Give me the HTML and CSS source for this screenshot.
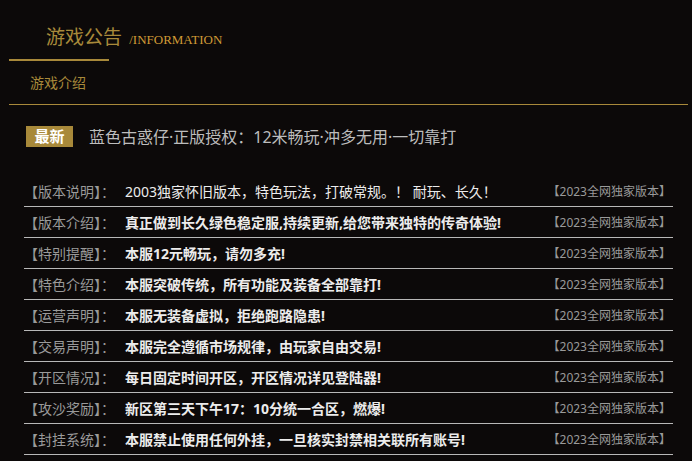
FILE: index.html
```html
<!DOCTYPE html>
<html lang="zh-CN">
<head>
    <meta charset="UTF-8">
    <meta name="viewport" content="width=device-width, initial-scale=1.0">
    <title>游戏公告</title>
    <link rel="stylesheet" href="styles.css">
</head>
<body>

<div class="wrap">
    <div class="head">
        <span class="head-title">游戏公告</span>
        <span class="head-en">/INFORMATION</span>
    </div>
    <div class="head-line"></div>
    <div class="tab">游戏介绍</div>

    <div class="news">
        <span class="badge">最新</span>
        <span class="news-title">蓝色古惑仔·正版授权：12米畅玩·冲多无用·一切靠打</span>
    </div>

    <ul class="list">
        <li class="row">
            <span class="label">【版本说明】：</span>
            <span class="text thin">2003独家怀旧版本，特色玩法，打破常规。！ 耐玩、长久！</span>
            <span class="tag">【2023全网独家版本】</span>
        </li>
        <li class="row">
            <span class="label">【版本介绍】：</span>
            <span class="text">真正做到长久绿色稳定服,持续更新,给您带来独特的传奇体验!</span>
            <span class="tag">【2023全网独家版本】</span>
        </li>
        <li class="row">
            <span class="label">【特别提醒】：</span>
            <span class="text">本服12元畅玩，请勿多充!</span>
            <span class="tag">【2023全网独家版本】</span>
        </li>
        <li class="row">
            <span class="label">【特色介绍】：</span>
            <span class="text">本服突破传统，所有功能及装备全部靠打!</span>
            <span class="tag">【2023全网独家版本】</span>
        </li>
        <li class="row">
            <span class="label">【运营声明】：</span>
            <span class="text">本服无装备虚拟，拒绝跑路隐患!</span>
            <span class="tag">【2023全网独家版本】</span>
        </li>
        <li class="row">
            <span class="label">【交易声明】：</span>
            <span class="text">本服完全遵循市场规律，由玩家自由交易!</span>
            <span class="tag">【2023全网独家版本】</span>
        </li>
        <li class="row">
            <span class="label">【开区情况】：</span>
            <span class="text">每日固定时间开区，开区情况详见登陆器!</span>
            <span class="tag">【2023全网独家版本】</span>
        </li>
        <li class="row">
            <span class="label">【攻沙奖励】：</span>
            <span class="text">新区第三天下午17：10分统一合区，燃爆!</span>
            <span class="tag">【2023全网独家版本】</span>
        </li>
        <li class="row">
            <span class="label">【封挂系统】：</span>
            <span class="text">本服禁止使用任何外挂，一旦核实封禁相关联所有账号!</span>
            <span class="tag">【2023全网独家版本】</span>
        </li>
    </ul>
</div>

</body>
</html>
```

FILE: styles.css
```css
/* Halaman */
body {
    margin: 0;
    background-color: #0c0909;
    font-family: "Noto Sans", "Noto Sans CJK SC", "Microsoft YaHei", sans-serif;
}

.wrap {
    padding: 0 4px 0 9px;
}

/* Judul */
.head {
    padding: 24px 0 0 37px;
    height: 26px;
    line-height: 26px;
}

.head-title {
    font-size: 19px;
    color: #a8893a;
}

.head-en {
    font-family: "Liberation Serif", serif;
    font-size: 13px;
    color: #d09a36;
    margin-left: 3px;
}

.head-line {
    width: 100px;
    height: 2px;
    margin-top: 9px;
    background-color: #a8893a;
}

.tab {
    height: 43px;
    line-height: 44px;
    padding-left: 21px;
    font-size: 14px;
    color: #a8893a;
    border-bottom: 1px solid #a8893a;
}

/* Berita terbaru */
.news {
    display: flex;
    align-items: center;
    margin-top: 19px;
    padding-left: 17px;
}

.badge {
    width: 47px;
    height: 21px;
    line-height: 21px;
    text-align: center;
    background-color: #a8893a;
    color: #fff;
    font-size: 15px;
    font-weight: bold;
}

.news-title {
    margin-left: 16px;
    font-size: 16px;
    color: #bdbdbd;
}

/* Daftar */
.list {
    list-style: none;
    margin: 28px 15px 0 15px;
    padding: 0;
}

.row {
    display: flex;
    align-items: center;
    height: 30px;
    border-bottom: 1px solid #b8b8b8;
    font-size: 14px;
}

.label {
    width: 101px;
    color: #9a9a9a;
}

.text {
    flex: 1;
    color: #ececec;
    font-weight: bold;
}

.text.thin {
    font-weight: normal;
}

.tag {
    font-size: 12px;
    color: #9a9a9a;
    padding-right: 2px;
}
```
